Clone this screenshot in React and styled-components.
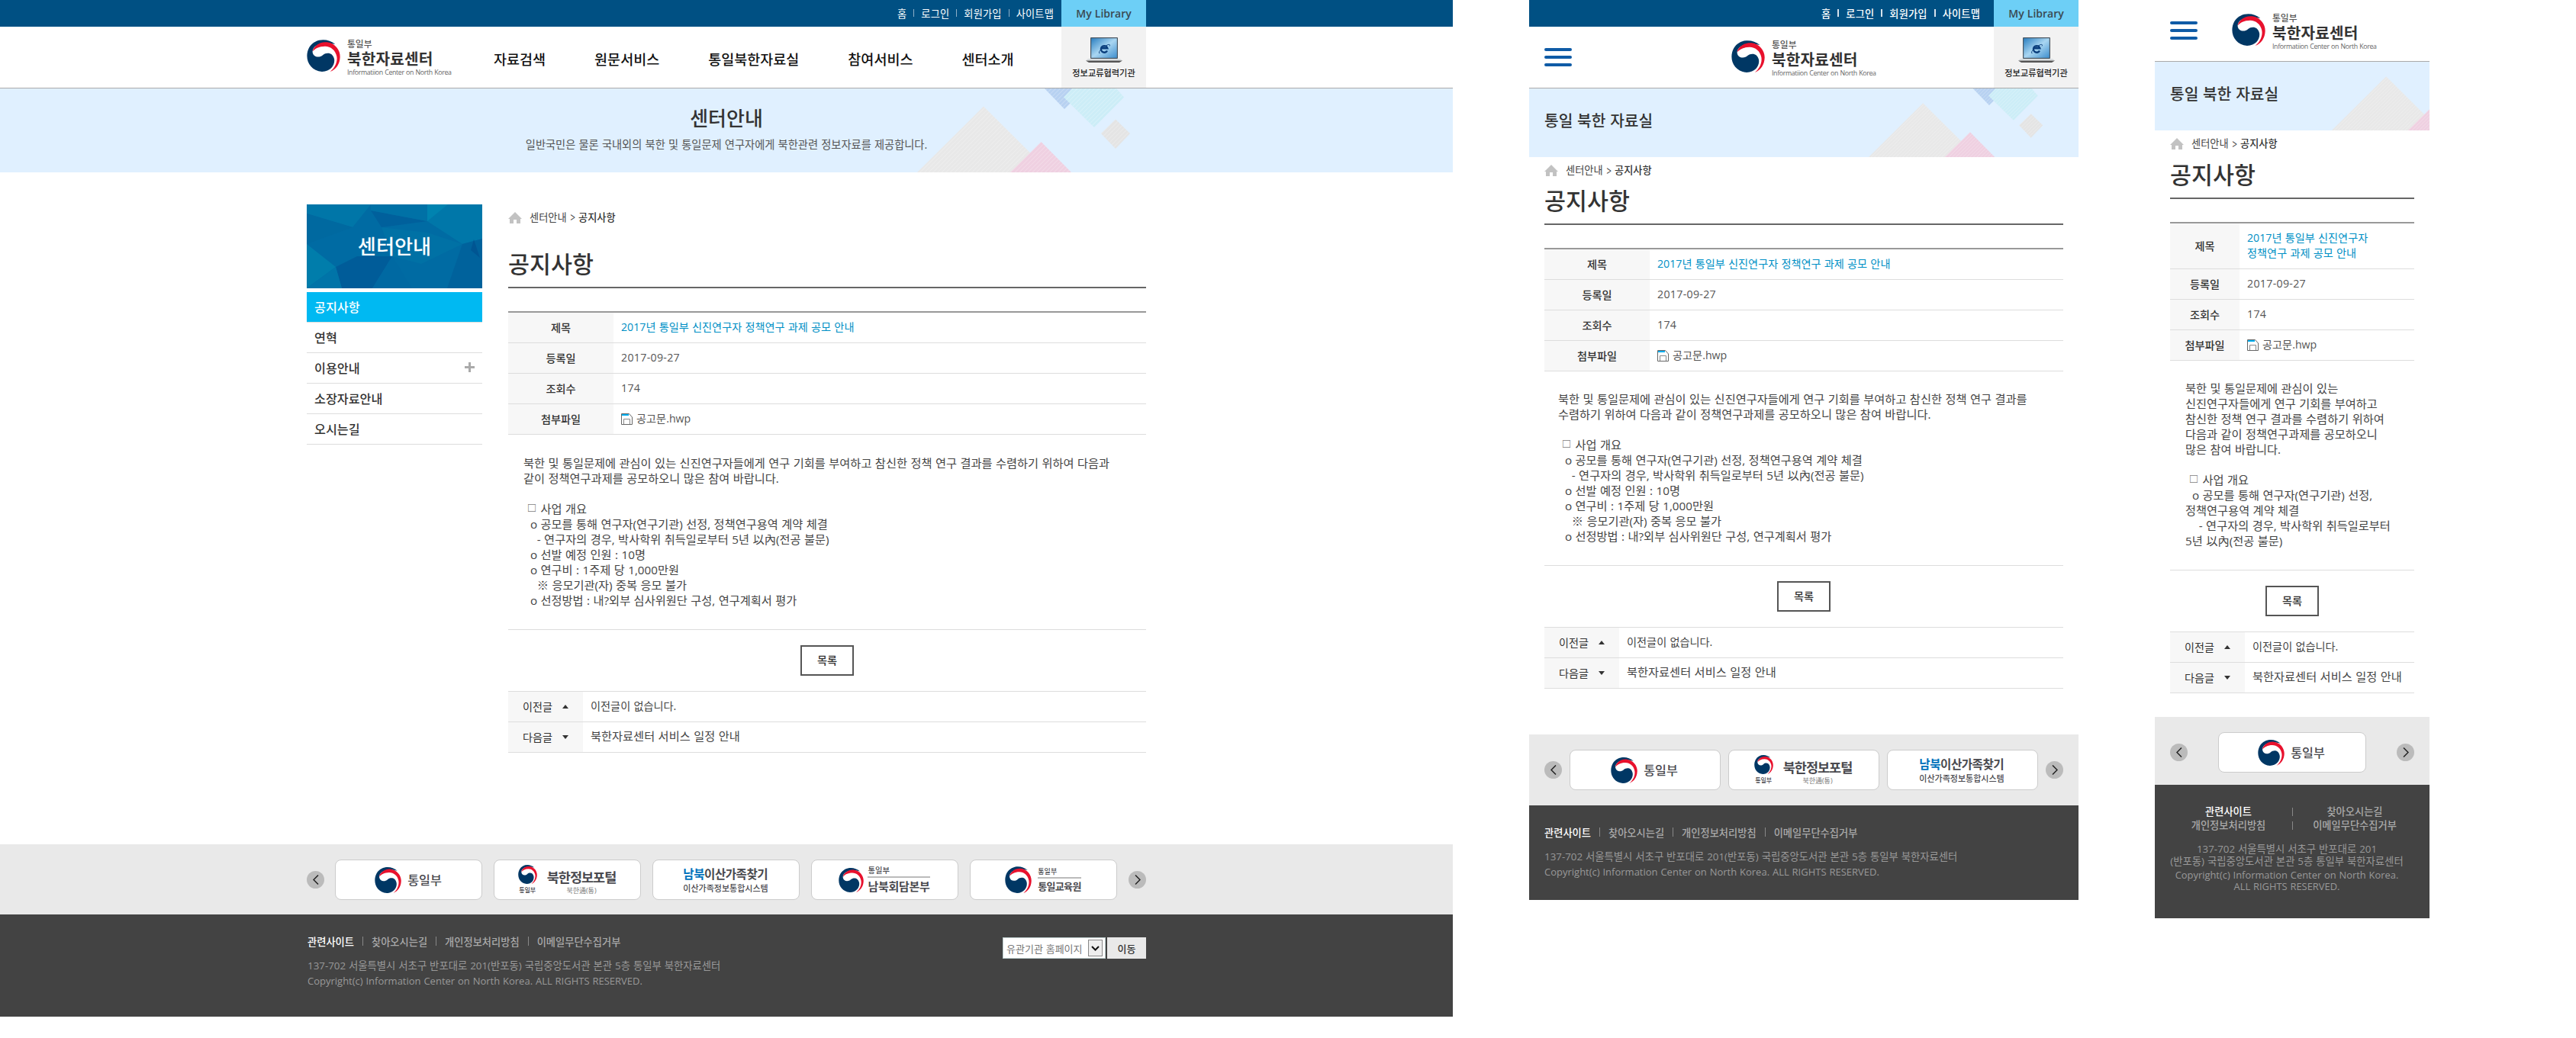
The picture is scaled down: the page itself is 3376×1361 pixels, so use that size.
import React from "react";
import styled, { createGlobalStyle, css } from "styled-components";

const Global = createGlobalStyle`
  * { box-sizing: border-box; }
  body { margin: 0; background: #fff; }
  h1, h2, p, ul, dl, dd, dt { margin: 0; padding: 0; font-weight: inherit; }
  ul { list-style: none; }
  button { font: inherit; border: 0; padding: 0; }
  #root { font-family: "Open Sans", "Noto Sans CJK KR", sans-serif; color: #333; white-space: nowrap; word-spacing: 0.03em; }
`;

const Board = styled.div`
  display: flex;
  align-items: flex-start;
  gap: 100px;
  width: 3376px;
  height: 1361px;
  overflow: hidden;
`;
const Page = styled.div`
  flex: none;
  width: ${(p) => p.$w}px;
`;
const Inner = styled.div`
  display: flex;
  width: ${(p) => p.$w}px;
  margin: 0 auto;
  height: 100%;
`;

/* ---------- top bar ---------- */
const TopBar = styled.div`
  height: 35px;
  background: #005083;
`;
const Utils = styled.ul`
  display: flex;
  flex: 1;
  justify-content: flex-end;
  align-items: center;
  height: 34px;
  padding-right: ${(p) => (p.$bold ? 18 : 10)}px;
  font-size: 13.2px;
  font-weight: ${(p) => (p.$bold ? 500 : 400)};
  letter-spacing: 0.2px;
  color: #fff;
  li { display: flex; align-items: center; }
  li + li::before {
    content: "";
    width: ${(p) => (p.$bold ? 2 : 1)}px;
    height: 10px;
    margin: 0 9px;
    background: ${(p) => (p.$bold ? "#d5e2ec" : "#8fb0c8")};
  }
`;
const MyLibrary = styled.div`
  width: 111px;
  height: 35px;
  line-height: 35px;
  text-align: center;
  background: #6dcff6;
  font-size: 14px;
  font-weight: 600;
  color: #3a4a52;
`;

/* ---------- header ---------- */
const Header = styled.header`
  height: ${(p) => p.$h}px;
  border-bottom: 1px solid #aaa;
`;
const HeadRow = styled.div`
  display: flex;
  flex: 1;
  align-items: flex-start;
  padding: ${(p) => p.$pad};
`;
const Brand = styled.div`
  display: flex;
  gap: 9px;
  width: 192px;
  margin-left: ${(p) => p.$x || 0}px;
`;
const BrandText = styled.div`
  display: flex;
  flex-direction: column;
  small { margin-top: -1px; font-size: 11.8px; line-height: 13px; color: #555; font-weight: 500; }
  strong { margin-top: 1px; font-size: 20.2px; line-height: 24px; font-weight: 700; color: #333; letter-spacing: 0.2px; }
  span { margin-top: 1px; font-size: 8.8px; line-height: 10px; color: #666; letter-spacing: -0.35px; }
`;
const Nav = styled.nav`
  display: flex;
  gap: 64px;
  margin-left: 53px;
  font-size: 18.5px;
  line-height: 24px;
  font-weight: 500;
  color: #111;
  padding-top: 14px;
`;
const Partner = styled.div`
  display: flex;
  flex-direction: column;
  align-items: center;
  width: 111px;
  height: 80px;
  padding-top: 13px;
  background: #f2f2f2;
  font-size: 11.2px;
  line-height: 16px;
  font-weight: 500;
  color: #222;
  svg { margin-bottom: 4px; }
`;
const Burger = styled.div`
  display: flex;
  flex-direction: column;
  gap: 6px;
  width: 36px;
  padding-top: ${(p) => p.$top}px;
  i { height: 4px; border-radius: 2px; background: #0f5ba6; }
`;

/* ---------- banner ---------- */
const Banner = styled.section`
  position: relative;
  display: flex;
  flex-direction: column;
  overflow: hidden;
  height: ${(p) => p.$h}px;
  background: #e0f0ff;
  svg { position: absolute; top: 0; left: ${(p) => p.$art}px; }
`;
const WideTitle = styled.h2`
  margin-top: 23px;
  font-size: 26px;
  line-height: 32px;
  font-weight: 500;
  text-align: center;
`;
const WideSub = styled.p`
  margin-top: 8px;
  font-size: 14.25px;
  line-height: 22px;
  text-align: center;
  color: #555;
`;
const SmallTitle = styled.h2`
  margin: 27px 0 0 20px;
  font-size: 20.3px;
  line-height: 30px;
  font-weight: 500;
`;

/* ---------- side menu ---------- */
const Columns = styled.div`
  display: flex;
  width: 1100px;
  height: 881px;
  margin: 0 auto;
  padding-top: 42px;
  gap: 34px;
`;
const Side = styled.aside`
  width: 230px;
`;
const SideHead = styled.div`
  display: grid;
  height: 110px;
  margin-bottom: 5px;
  > * { grid-area: 1 / 1; }
  h2 { place-self: center; font-size: 26.2px; line-height: 32px; font-weight: 500; color: #fff; }
`;
const SideItem = styled.li`
  display: flex;
  justify-content: space-between;
  align-items: center;
  height: 40px;
  padding: 0 10px 2px;
  border-bottom: 1px solid #ddd;
  font-size: 16.2px;
  font-weight: 500;
  ${(p) => p.$on && css`background: #00b9f2; color: #fff;`}
`;
const Plus = styled.i`
  width: 13px;
  height: 13px;
  background: linear-gradient(#aaa, #aaa) center / 13px 3px no-repeat, linear-gradient(#aaa, #aaa) center / 3px 13px no-repeat;
`;

/* ---------- article ---------- */
const Main = styled.main`
  flex: 1;
  min-width: 0;
  padding: ${(p) => p.$pad};
`;
const Crumbs = styled.div`
  display: flex;
  align-items: center;
  height: 20px;
  font-size: 13.2px;
  line-height: 18px;
  padding-bottom: 2px;
  color: #444;
  svg { margin: 1px 10px 0 0; }
  b { font-weight: 500; color: #333; }
  span { margin: 0 4px; transform: scale(0.85, 1.3); }
`;
const Title = styled.h1`
  margin-top: ${(p) => p.$top}px;
  height: 47px;
  border-bottom: 2px solid #666;
  font-size: 30.4px;
  line-height: 32px;
  font-weight: 500;
`;
const Info = styled.dl`
  margin-top: 30px;
  border-top: 2px solid #999;
`;
const InfoRow = styled.div`
  display: flex;
  min-height: 40px;
  border-bottom: 1px solid #ddd;
  dt {
    display: flex;
    align-items: center;
    justify-content: center;
    flex: none;
    width: ${(p) => p.$label}px;
    padding-bottom: 1px;
    background: #f7f7f7;
    font-size: 14.2px;
    font-weight: 500;
  }
  dd {
    display: flex;
    align-items: center;
    gap: 5px;
    padding: 9px 10px 10px;
    font-size: 14.2px;
    line-height: 20px;
    color: #555;
    white-space: pre-line;
  }
`;
const Subject = styled.span`
  color: #008fc5;
`;
const Digits = styled.span`
  letter-spacing: 0.3px;
`;
const Body = styled.div`
  padding: ${(p) => p.$pad};
  border-bottom: 1px solid #ddd;
  font-size: 15.25px;
  line-height: 20px;
  color: #444;
`;
const Line = styled.p`
  display: flex;
  height: 20px;
  white-space: pre;
`;
const Box = styled.span`
  width: 14px;
  margin-left: 4px;
  text-align: center;
  font-size: 12px;
`;
const ListButton = styled.button`
  display: block;
  width: 70px;
  height: 40px;
  margin: 20px auto;
  padding-bottom: 2px;
  border: 2px solid #555;
  background: #fff;
  font-size: 14.2px;
  font-weight: 500;
  color: #333;
`;
const Siblings = styled.div`
  border-top: 1px solid #ddd;
`;
const Sibling = styled.div`
  display: flex;
  height: 40px;
  border-bottom: 1px solid #ddd;
  font-size: ${(p) => p.$fs}px;
  line-height: 37px;
  color: #444;
  div {
    display: flex;
    align-items: center;
    gap: 13px;
    width: 98px;
    margin-right: 10px;
    padding-left: 19px;
    background: #f7f7f7;
    font-size: 14.1px;
    color: #333;
  }
`;

/* ---------- related sites ---------- */
const Band = styled.section`
  height: ${(p) => p.$h}px;
  padding-top: 20px;
  background: #e9e9e9;
`;
const BandRow = styled.div`
  display: flex;
  align-items: center;
  justify-content: space-between;
  width: ${(p) => p.$w}px;
  height: 53px;
  margin: 0 auto;
`;
const Cards = styled.div`
  display: flex;
  gap: ${(p) => p.$gap}px;
  margin-right: 1px;
`;
const Card = styled.div`
  display: flex;
  align-items: center;
  justify-content: center;
  width: ${(p) => p.$w}px;
  height: 53px;
  padding-right: 1px;
  border: 1px solid #ccc;
  border-radius: 8px;
  background: #fff;
  color: #444;
  gap: ${(p) => p.$gap || 0}px;
`;
const Arrow = styled.div`
  display: grid;
  place-items: center;
  width: 23px;
  height: 23px;
  border-radius: 50%;
  background: #bbb;
`;
const Stack = styled.div`
  display: flex;
  flex-direction: column;
  align-items: ${(p) => p.$align || "flex-start"};
  padding-top: ${(p) => p.$top || 0}px;
`;
const Word = styled.span`
  font-size: ${(p) => p.$fs}px;
  line-height: ${(p) => p.$lh}px;
  font-weight: ${(p) => p.$wt || 700};
  letter-spacing: ${(p) => p.$ls || 0}px;
  color: ${(p) => p.$c || "#4a4a4f"};
  em { font-style: normal; color: #0072bc; }
`;
const Rule = styled.i`
  align-self: stretch;
  height: 2px;
  margin: 2px 0 3px;
  background: #bbb;
`;

/* ---------- footer ---------- */
const Footer = styled.footer`
  height: ${(p) => p.$h}px;
  background: #434343;
  color: #999;
`;
const FootInner = styled.div`
  display: flex;
  justify-content: space-between;
  align-items: flex-start;
  width: ${(p) => p.$w}px;
  margin: 0 auto;
  padding-top: ${(p) => p.$top}px;
`;
const FootLinks = styled.ul`
  display: flex;
  align-items: center;
  height: 20px;
  margin-left: ${(p) => p.$x || 0}px;
  margin-bottom: 12px;
  font-size: 13.25px;
  font-weight: 500;
  color: #aaa;
  li { display: flex; align-items: center; }
  li:first-child { color: #fff; }
  li + li::before {
    content: "";
    width: 1px;
    height: 12px;
    margin: 0 ${(p) => p.$gap}px;
    background: #888;
  }
`;
const Address = styled.p`
  margin-left: ${(p) => p.$x || 0}px;
  font-size: ${(p) => p.$fs}px;
  line-height: 20px;
`;
const Jump = styled.div`
  display: flex;
  gap: 2px;
  height: 28px;
  margin-top: 5px;
  font-size: 13px;
`;
const Select = styled.div`
  display: flex;
  align-items: center;
  justify-content: space-between;
  width: 135px;
  padding: 0 3px 0 4px;
  border: 1px solid #bcc;
  background: #fff;
  color: #777;
  i {
    display: grid;
    place-items: center;
    width: 19px;
    height: 22px;
    border: 1px solid #888;
    background: #eee;
  }
`;
const Go = styled.button`
  width: 51px;
  background: #e9e9e9;
  color: #333;
  font-weight: 500;
`;
const PhoneFoot = styled.div`
  padding-top: 26px;
  text-align: center;
`;
const PhoneLinks = styled.div`
  display: grid;
  grid-template-columns: 167px 1px 162px;
  justify-content: start;
  align-items: center;
  margin: 0 0 14px 13px;
  font-size: 13.25px;
  line-height: 18px;
  font-weight: 500;
  color: #aaa;
  b { font-weight: 500; color: #fff; }
  i { height: 11px; background: #888; }
`;
const PhoneAddress = styled.p`
  width: 346px;
  margin-bottom: 3px;
  font-size: ${(p) => p.$fs}px;
  line-height: ${(p) => p.$lh}px;
`;

/* ---------- drawings ---------- */
const Emblem = ({ w = 44, h = 42 }) => (
  <svg width={w} height={h} viewBox="0 0 132 126" preserveAspectRatio="none">
    <path fill="#003764" d="M112 18C82-8 32-6 10 30C-12 70 8 122 60 126C96 125 112 98 108 76C103 50 78 48 64 60C48 74 26 68 23 50C20 22 62 4 112 18Z" />
    <path fill="#e8112d" d="M23 46C26 26 52 6 80 10C112 14 132 42 131 68C130 96 116 116 92 126C110 112 122 88 118 66C114 42 94 26 72 26C48 26 32 36 23 46Z" />
  </svg>
);
const Laptop = () => (
  <svg width="50" height="36" viewBox="0 0 50 36">
    <defs>
      <linearGradient id="lcd" x1="0" y1="0" x2="1" y2="1">
        <stop offset="0" stopColor="#2b7fc0" />
        <stop offset="0.5" stopColor="#a9d6f2" />
        <stop offset="1" stopColor="#3f8fce" />
      </linearGradient>
    </defs>
    <rect x="7" y="1" width="36" height="28" rx="1" fill="#4a5661" />
    <rect x="8.2" y="2.200" width="33.600" height="25.600" fill="url(#lcd)" />
    <path d="M4 29H46L49 31.500H1Z" fill="#d9dde0" />
    <path d="M1 31.500H49L45 34H5Z" fill="#555" />
    <g fill="none" stroke="#0b3f7d">
      <path d="M29 18.500A4.300 4.300 0 1 1 29.300 15.200H21.500" strokeWidth="2.4" />
      <path d="M19.500 21.500C17 22.500 18.500 18 25 13.500S33.500 10 32 12.500" strokeWidth="1" />
    </g>
  </svg>
);
const Shapes = ({ h }) => (
  <svg width={(h * 300) / 110} height={h} viewBox="0 0 300 110">
    <defs>
      <pattern id={"hatch" + h} width="4" height="4" patternUnits="userSpaceOnUse" patternTransform="rotate(45)">
        <path d="M0 0V4" stroke="#fff" strokeOpacity="0.3" strokeWidth="1.5" />
      </pattern>
    </defs>
    {[
      ["M0 110L87 23.500L174 110Z", "#e8e8e8"],
      ["M122 110L162.500 70L202 110Z", "#efd0e1"],
      ["M167 0L193 27L220 0Z", "#b7d1f1"],
      ["M203 0L192 11.500L232 51L271 11.500L261 0Z", "#ccedf7"],
      ["M260 40.500L279 59L260 79L241 59Z", "#e4e4e4"],
    ].map(([d, c]) => (
      <g key={d}>
        <path d={d} fill={c} />
        <path d={d} fill={`url(#hatch${h})`} />
      </g>
    ))}
  </svg>
);
const Facets = () => (
  <svg width="230" height="110" viewBox="0 0 230 110">
    <rect width="230" height="110" fill="#006ba3" />
    <path d="M0 0H84L60 30L0 12Z" fill="#0076a8" />
    <path d="M84 8L158 22L98 30Z" fill="#00609c" />
    <path d="M84 0H158V22L84 8Z" fill="#0071a6" />
    <path d="M158 0H230V45L204 52L158 22Z" fill="#0077a9" />
    <path d="M158 0H185L158 22Z" fill="#0083b0" />
    <path d="M0 12L60 30L0 52Z" fill="#0069a0" />
    <path d="M98 30L158 37L204 52L150 78L112 68Z" fill="#0071a5" />
    <path d="M0 52L38 82L0 110Z" fill="#007dab" />
    <path d="M38 82L66 68H112L86 110H46Z" fill="#005c99" />
    <path d="M204 52L230 45V110H184Z" fill="#00629c" />
    <path d="M219 46L227 70L215 60Z" fill="#005592" />
    <path d="M112 68L138 110H86Z" fill="#0069a2" />
    <path d="M0 110L38 82L46 110Z" fill="#0074a8" />
  </svg>
);
const Home = () => (
  <svg width="18" height="15" viewBox="0 0 18 15">
    <path fill="#c2c2c2" d="M9 0L18 9H16V15H11V10H7V15H2V9H0Z" />
  </svg>
);
const FileIcon = () => (
  <svg width="15" height="15" viewBox="0 0 15 15">
    <path d="M.5 .5H10.500L14.500 5V14.500H.5Z" fill="#fff" stroke="#666" />
    <path d="M1 1H10V3H1Z" fill="#00aeef" />
    <path d="M3.500 14V7.500H11.500V14" fill="none" stroke="#888" />
  </svg>
);
const Triangle = ({ down }) => (
  <svg width="8" height="5" viewBox="0 0 8 5">
    <path fill="#333" d={down ? "M0 0H8L4 5Z" : "M0 5H8L4 0Z"} />
  </svg>
);
const Chevron = ({ right }) => (
  <svg width="8" height="13" viewBox="0 0 8 13">
    <path d={right ? "M1 .5L7 6.500L1 12.500" : "M7 .5L1 6.500L7 12.500"} fill="none" stroke="#222" strokeWidth="1.5" />
  </svg>
);

const Logo = ({ x }) => (
  <Brand $x={x}>
    <Emblem />
    <BrandText>
      <small>통일부</small>
      <strong>북한자료센터</strong>
      <span>Informatiion Center on North Korea</span>
    </BrandText>
  </Brand>
);
const PartnerBox = () => (
  <Partner>
    <Laptop />
    정보교류협력기관
  </Partner>
);
const UtilLinks = ({ bold }) => (
  <Utils $bold={bold}>
    {["홈", "로그인", "회원가입", "사이트맵"].map((s) => (
      <li key={s}>{s}</li>
    ))}
  </Utils>
);

const PLAN = `□ 사업 개요
  o 공모를 통해 연구자(연구기관) 선정, 정책연구용역 계약 체결
    - 연구자의 경우, 박사학위 취득일로부터 5년 以內(전공 불문)
  o 선발 예정 인원 : 10명
  o 연구비 : 1주제 당 1,000만원
    ※ 응모기관(자) 중복 응모 불가
  o 선정방법 : 내?외부 심사위원단 구성, 연구계획서 평가`;
const WIDE_BODY = `북한 및 통일문제에 관심이 있는 신진연구자들에게 연구 기회를 부여하고 참신한 정책 연구 결과를 수렴하기 위하여 다음과
같이 정책연구과제를 공모하오니 많은 참여 바랍니다.

${PLAN}`;
const TABLET_BODY = `북한 및 통일문제에 관심이 있는 신진연구자들에게 연구 기회를 부여하고 참신한 정책 연구 결과를
수렴하기 위하여 다음과 같이 정책연구과제를 공모하오니 많은 참여 바랍니다.

${PLAN}`;
const PHONE_BODY = `북한 및 통일문제에 관심이 있는
신진연구자들에게 연구 기회를 부여하고
참신한 정책 연구 결과를 수렴하기 위하여
다음과 같이 정책연구과제를 공모하오니
많은 참여 바랍니다.

□ 사업 개요
  o 공모를 통해 연구자(연구기관) 선정,
정책연구용역 계약 체결
    - 연구자의 경우, 박사학위 취득일로부터
5년 以內(전공 불문)`;

const Article = ({
  label = 138,
  subject = "2017년 통일부 신진연구자 정책연구 과제 공모 안내",
  titleTop,
  body,
  bodyPad,
}) => (
  <>
    <Crumbs>
      <Home />
      센터안내<span>&gt;</span>
      <b>공지사항</b>
    </Crumbs>
    <Title $top={titleTop}>공지사항</Title>
    <Info>
      <InfoRow $label={label}>
        <dt>제목</dt>
        <dd><Subject>{subject}</Subject></dd>
      </InfoRow>
      <InfoRow $label={label}>
        <dt>등록일</dt>
        <dd><Digits>2017-09-27</Digits></dd>
      </InfoRow>
      <InfoRow $label={label}>
        <dt>조회수</dt>
        <dd><Digits>174</Digits></dd>
      </InfoRow>
      <InfoRow $label={label}>
        <dt>첨부파일</dt>
        <dd><FileIcon />공고문.hwp</dd>
      </InfoRow>
    </Info>
    <Body $pad={bodyPad}>
      {body.split("\n").map((text, i) =>
        text.startsWith("□") ? (
          <Line key={i}><Box>□</Box><span>{text.slice(1)}</span></Line>
        ) : (
          <Line key={i}>{text}</Line>
        )
      )}
    </Body>
    <ListButton>목록</ListButton>
    <Siblings>
      <Sibling $fs={14.2}>
        <div>이전글<Triangle /></div>
        이전글이 없습니다.
      </Sibling>
      <Sibling $fs={15.25}>
        <div>다음글<Triangle down /></div>
        북한자료센터 서비스 일정 안내
      </Sibling>
    </Siblings>
  </>
);

const CARDS = [
  (w) => (
    <Card key="a" $w={w} $gap={8}>
      <Emblem w={35} h={34} />
      <Word $fs={16.2} $lh={20} $wt={500}>통일부</Word>
    </Card>
  ),
  (w) => (
    <Card key="b" $w={w} $gap={13}>
      <Stack $align="center" $top={1}>
        <Emblem w={25} h={25} />
        <Word $fs={8} $lh={15} $wt={500}>통일부</Word>
      </Stack>
      <Stack $align="center" $top={6}>
        <Word $fs={17.5} $lh={22} $ls={-1}>북한정보포털</Word>
        <Word $fs={9} $lh={13} $wt={400} $c="#777">북한通(통)</Word>
      </Stack>
    </Card>
  ),
  (w) => (
    <Card key="c" $w={w}>
      <Stack>
        <Word $fs={15.6} $lh={21} $ls={-0.5}><em>남북</em>이산가족찾기</Word>
        <Word $fs={11} $lh={15} $wt={500}>이산가족정보통합시스템</Word>
      </Stack>
    </Card>
  ),
  (w) => (
    <Card key="d" $w={w} $gap={5}>
      <Emblem w={33} h={32} />
      <Stack>
        <Word $fs={10.3} $lh={11} $wt={500}>통일부</Word>
        <Rule />
        <Word $fs={15} $lh={17} $ls={-0.3}>남북회담본부</Word>
      </Stack>
    </Card>
  ),
  (w) => (
    <Card key="e" $w={w} $gap={8}>
      <Emblem w={35} h={35} />
      <Stack>
        <Word $fs={9} $lh={11} $wt={500}>통일부</Word>
        <Rule />
        <Word $fs={13} $lh={15} $ls={-0.7}>통일교육원</Word>
      </Stack>
    </Card>
  ),
];
const Related = ({ h, w, cardW, gap, count }) => (
  <Band $h={h}>
    <BandRow $w={w}>
      <Arrow><Chevron /></Arrow>
      <Cards $gap={gap}>{CARDS.slice(0, count).map((c) => c(cardW))}</Cards>
      <Arrow><Chevron right /></Arrow>
    </BandRow>
  </Band>
);
const LINKS = ["관련사이트", "찾아오시는길", "개인정보처리방침", "이메일무단수집거부"];
const FootText = ({ x, gap }) => (
  <div>
    <FootLinks $x={x} $gap={gap}>
      {LINKS.map((s) => (
        <li key={s}>{s}</li>
      ))}
    </FootLinks>
    <Address $x={x} $fs={13.35}>137-702 서울특별시 서초구 반포대로 201(반포동) 국립중앙도서관 본관 5층 통일부 북한자료센터</Address>
    <Address $x={x} $fs={13}>Copyright(c) Information Center on North Korea. ALL RIGHTS RESERVED.</Address>
  </div>
);

const Desktop = () => (
  <Page $w={1904}>
    <TopBar>
      <Inner $w={1100}>
        <UtilLinks />
        <MyLibrary>My Library</MyLibrary>
      </Inner>
    </TopBar>
    <Header $h={81}>
      <Inner $w={1100}>
        <HeadRow $pad="17px 0 0">
          <Logo />
          <Nav>
            {["자료검색", "원문서비스", "통일북한자료실", "참여서비스", "센터소개"].map((s) => (
              <span key={s}>{s}</span>
            ))}
          </Nav>
        </HeadRow>
        <PartnerBox />
      </Inner>
    </Header>
    <Banner $h={110} $art={1202}>
      <Shapes h={110} />
      <WideTitle>센터안내</WideTitle>
      <WideSub>일반국민은 물론 국내외의 북한 및 통일문제 연구자에게 북한관련 정보자료를 제공합니다.</WideSub>
    </Banner>
    <Columns>
      <Side>
        <SideHead>
          <Facets />
          <h2>센터안내</h2>
        </SideHead>
        <ul>
          <SideItem $on>공지사항</SideItem>
          <SideItem>연혁</SideItem>
          <SideItem>이용안내<Plus /></SideItem>
          <SideItem>소장자료안내</SideItem>
          <SideItem>오시는길</SideItem>
        </ul>
      </Side>
      <Main $pad="8px 0 0">
        <Article titleTop={35} body={WIDE_BODY} bodyPad="27px 20px 28px" />
      </Main>
    </Columns>
    <Related h={92} w={1100} cardW={193} gap={15} count={5} />
    <Footer $h={134}>
      <FootInner $w={1100} $top={25}>
        <FootText x={1} gap={11} />
        <Jump>
          <Select>
            유관기관 홈페이지
            <i>
              <svg width="11" height="7" viewBox="0 0 11 7"><path d="M1 1L5.500 5.500L10 1" fill="none" stroke="#111" strokeWidth="2" /></svg>
            </i>
          </Select>
          <Go>이동</Go>
        </Jump>
      </FootInner>
    </Footer>
  </Page>
);

const Tablet = () => (
  <Page $w={720}>
    <TopBar>
      <Inner $w={720}>
        <UtilLinks bold />
        <MyLibrary>My Library</MyLibrary>
      </Inner>
    </TopBar>
    <Header $h={81}>
      <Inner $w={720}>
        <HeadRow $pad="18px 0 0 20px">
          <Burger $top={10}><i /><i /><i /></Burger>
          <Logo x={209} />
        </HeadRow>
        <PartnerBox />
      </Inner>
    </Header>
    <Banner $h={90} $art={445}>
      <Shapes h={90} />
      <SmallTitle>통일 북한 자료실</SmallTitle>
    </Banner>
    <Main $pad="8px 20px 60px">
      <Article titleTop={14} body={TABLET_BODY} bodyPad="26px 18px 28px" />
    </Main>
    <Related h={93} w={680} cardW={198} gap={10} count={3} />
    <Footer $h={124}>
      <FootInner $w={680} $top={25}>
        <FootText gap={11} />
      </FootInner>
    </Footer>
  </Page>
);

const Phone = () => (
  <Page $w={360}>
    <Header $h={81}>
      <HeadRow $pad="18px 0 0 20px">
        <Burger $top={10}><i /><i /><i /></Burger>
        <Logo x={45} />
      </HeadRow>
    </Header>
    <Banner $h={90} $art={232}>
      <Shapes h={90} />
      <SmallTitle>통일 북한 자료실</SmallTitle>
    </Banner>
    <Main $pad="8px 20px 31px">
      <Article
        label={91}
        titleTop={15}
        subject={"2017년 통일부 신진연구자\n정책연구 과제 공모 안내"}
        body={PHONE_BODY}
        bodyPad="26px 20px 28px"
      />
    </Main>
    <Related h={89} w={320} cardW={194} gap={10} count={1} />
    <Footer $h={175}>
      <PhoneFoot>
        <PhoneLinks>
          <b>{LINKS[0]}</b><i /><span>{LINKS[1]}</span>
          <span>{LINKS[2]}</span><i /><span>{LINKS[3]}</span>
        </PhoneLinks>
        <PhoneAddress $fs={13.35} $lh={16}>137-702 서울특별시 서초구 반포대로 201<br />(반포동) 국립중앙도서관 본관 5층 통일부 북한자료센터</PhoneAddress>
        <PhoneAddress $fs={12.9} $lh={15}>Copyright(c) Information Center on North Korea.<br />ALL RIGHTS RESERVED.</PhoneAddress>
      </PhoneFoot>
    </Footer>
  </Page>
);

export default function App() {
  return (
    <>
      <Global />
      <Board>
        <Desktop />
        <Tablet />
        <Phone />
      </Board>
    </>
  );
}
